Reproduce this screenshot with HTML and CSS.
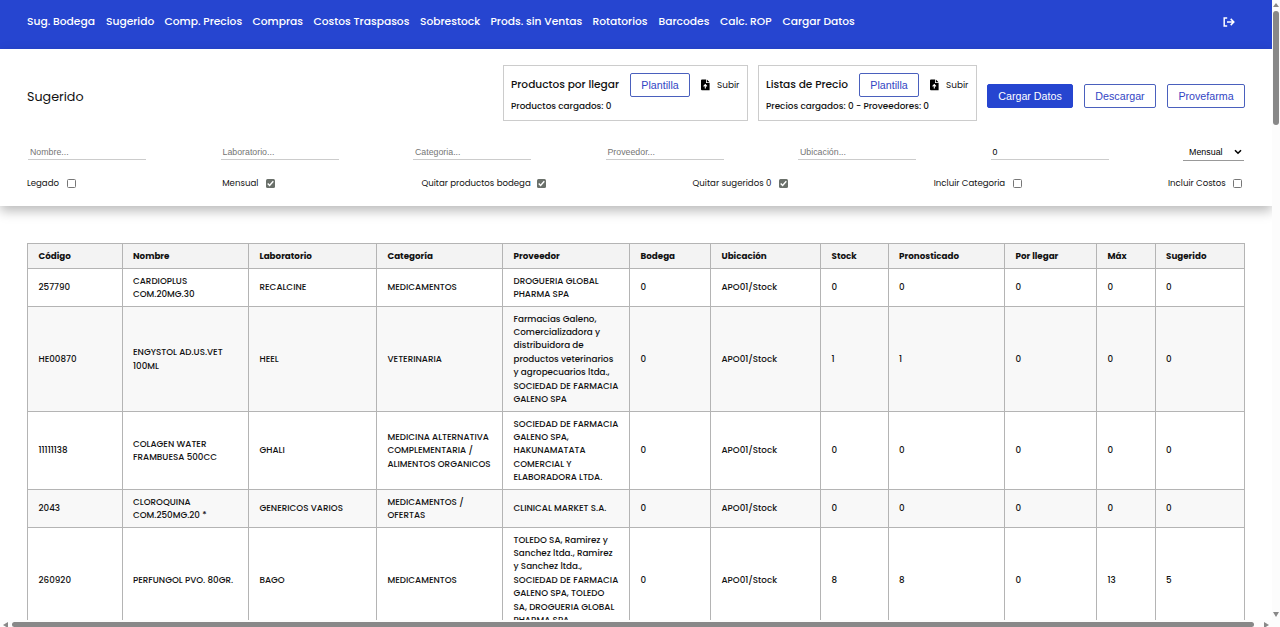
FILE: index.html
```html
<!DOCTYPE html>
<html lang="es">
<head>
<meta charset="utf-8">
<title>Sugerido</title>
<link rel="stylesheet" href="styles.css">
</head>
<body>
<div class="window">
<div class="page">
  <nav class="navbar">
    <div class="nav-links"><a>Sug. Bodega</a><a>Sugerido</a><a>Comp. Precios</a><a>Compras</a><a>Costos Traspasos</a><a>Sobrestock</a><a>Prods. sin Ventas</a><a>Rotatorios</a><a>Barcodes</a><a>Calc. ROP</a><a>Cargar Datos</a></div>
    <svg class="logout" viewBox="0 0 12 10" fill="none" stroke="#fff" stroke-width="1.5"><path d="M4.2 1H1.2V9H4.2M4 5H10.5M7.7 1.9L10.8 5L7.7 8.1"/></svg>
  </nav>
  <section class="panel">
    <div class="top">
      <h1>Sugerido</h1>
      <div class="actions">
        <div class="box box-products">
          <div class="box-row"><span class="box-title">Productos por llegar</span><button class="btn small">Plantilla</button><svg class="file" viewBox="0 0 9 12"><path fill="#000" d="M1 0.5H5V4H8.6V11.2H1Q0 11.2 0 10.2V1.5Q0 .5 1 .5ZM5.8.5L8.6 3.2H5.8Z"/><path d="M4.3 9.5V5.8M2.6 7.3L4.3 5.6L6 7.3" stroke="#fff" stroke-width="1.1" fill="none"/></svg><span class="upload">Subir</span></div>
          <p>Productos cargados: 0</p>
        </div>
        <div class="box box-prices">
          <div class="box-row"><span class="box-title">Listas de Precio</span><button class="btn small">Plantilla</button><svg class="file" viewBox="0 0 9 12"><path fill="#000" d="M1 0.5H5V4H8.6V11.2H1Q0 11.2 0 10.2V1.5Q0 .5 1 .5ZM5.8.5L8.6 3.2H5.8Z"/><path d="M4.3 9.5V5.8M2.6 7.3L4.3 5.6L6 7.3" stroke="#fff" stroke-width="1.1" fill="none"/></svg><span class="upload">Subir</span></div>
          <p>Precios cargados: 0 - Proveedores: 0</p>
        </div>
        <button class="btn primary">Cargar Datos</button>
        <button class="btn download">Descargar</button>
        <button class="btn provider">Provefarma</button>
      </div>
    </div>
    <div class="filters">
      <span class="field">Nombre...</span><span class="field">Laboratorio...</span><span class="field">Categoria...</span><span class="field">Proveedor...</span><span class="field">Ubicación...</span><span class="field filled">0</span>
      <span class="select">Mensual<svg viewBox="0 0 8 6"><path d="M1 1.2L4 4.2L7 1.2" fill="none" stroke="#000" stroke-width="1.6"/></svg></span>
    </div>
    <div class="checks">
      <label class="c1">Legado<i class="check"></i></label>
      <label class="c2">Mensual<i class="check on"><svg viewBox="0 0 9 9"><path d="M1.7 4.6L3.6 6.5L7.3 2.3"/></svg></i></label>
      <label class="c3">Quitar productos bodega<i class="check on"><svg viewBox="0 0 9 9"><path d="M1.7 4.6L3.6 6.5L7.3 2.3"/></svg></i></label>
      <label class="c4">Quitar sugeridos 0<i class="check on"><svg viewBox="0 0 9 9"><path d="M1.7 4.6L3.6 6.5L7.3 2.3"/></svg></i></label>
      <label class="c5">Incluir Categoria<i class="check"></i></label>
      <label class="c6">Incluir Costos<i class="check"></i></label>
    </div>
  </section>
  <table>
    <colgroup><col class="w-code"><col class="w-name"><col class="w-lab"><col class="w-cat"><col class="w-prov"><col class="w-bod"><col class="w-ubi"><col class="w-stock"><col class="w-pron"><col class="w-lle"><col class="w-max"><col class="w-sug"></colgroup>
    <thead><tr><th>Código</th><th>Nombre</th><th>Laboratorio</th><th>Categoría</th><th>Proveedor</th><th>Bodega</th><th>Ubicación</th><th>Stock</th><th>Pronosticado</th><th>Por llegar</th><th>Máx</th><th>Sugerido</th></tr></thead>
    <tbody>
      <tr class="lines-2"><td>257790</td><td>CARDIOPLUS<br>COM.20MG.30</td><td>RECALCINE</td><td>MEDICAMENTOS</td><td>DROGUERIA GLOBAL<br>PHARMA SPA</td><td>0</td><td>APO01/Stock</td><td>0</td><td>0</td><td>0</td><td>0</td><td>0</td></tr>
      <tr class="lines-7"><td>HE00870</td><td>ENGYSTOL AD.US.VET<br>100ML</td><td>HEEL</td><td>VETERINARIA</td><td>Farmacias Galeno,<br>Comercializadora y<br>distribuidora de<br>productos veterinarios<br>y agropecuarios ltda.,<br>SOCIEDAD DE FARMACIA<br>GALENO SPA</td><td>0</td><td>APO01/Stock</td><td>1</td><td>1</td><td>0</td><td>0</td><td>0</td></tr>
      <tr class="lines-5"><td>11111138</td><td>COLAGEN WATER<br>FRAMBUESA 500CC</td><td>GHALI</td><td>MEDICINA ALTERNATIVA<br>COMPLEMENTARIA /<br>ALIMENTOS ORGANICOS</td><td>SOCIEDAD DE FARMACIA<br>GALENO SPA,<br>HAKUNAMATATA<br>COMERCIAL Y<br>ELABORADORA LTDA.</td><td>0</td><td>APO01/Stock</td><td>0</td><td>0</td><td>0</td><td>0</td><td>0</td></tr>
      <tr class="lines-2"><td>2043</td><td>CLOROQUINA<br>COM.250MG.20 *</td><td>GENERICOS VARIOS</td><td>MEDICAMENTOS /<br>OFERTAS</td><td>CLINICAL MARKET S.A.</td><td>0</td><td>APO01/Stock</td><td>0</td><td>0</td><td>0</td><td>0</td><td>0</td></tr>
      <tr class="lines-7"><td>260920</td><td>PERFUNGOL PVO. 80GR.</td><td>BAGO</td><td>MEDICAMENTOS</td><td>TOLEDO SA, Ramirez y<br>Sanchez ltda., Ramirez<br>y Sanchez ltda.,<br>SOCIEDAD DE FARMACIA<br>GALENO SPA, TOLEDO<br>SA, DROGUERIA GLOBAL<br>PHARMA SPA</td><td>0</td><td>APO01/Stock</td><td>8</td><td>8</td><td>0</td><td>13</td><td>5</td></tr>
    </tbody>
  </table>
</div>
<div class="vbar"><i class="up"></i><i class="thumb"></i><i class="down"></i></div>
<div class="hbar"><i class="left"></i><i class="thumb"></i><i class="right"></i></div>
</div>
</body>
</html>
```
FILE: styles.css
```css
* { box-sizing: border-box; }
body { margin: 0; overflow: hidden; font-family: Poppins, Inter, sans-serif; color: #111; background: #fff; }
.window { display: grid; grid-template-columns: 1272px 8px; grid-template-rows: 620px 7px; width: 1280px; height: 627px; overflow: hidden; }
.page { overflow: hidden; min-width: 0; }

.navbar { height: 49px; padding: 0 37px 6px 27px; background: #2645d0; display: flex; align-items: center; justify-content: space-between; }
.nav-links { display: grid; grid-template-columns: 79px 58.5px 88px 61px 106.5px 70.5px 102px 66px 61.5px 62.5px 73px; color: #fff; font-size: 10.7px; font-weight: 500; white-space: nowrap; }
.logout { width: 12px; height: 10px; }

.panel { height: 157px; padding: 16px 27px 0; background: #fff; box-shadow: 0 5px 11px rgba(0,0,0,.27); position: relative; }
.top { display: flex; justify-content: space-between; height: 56px; }
h1 { margin: 5px 0 0; font-size: 12.7px; font-weight: 400; line-height: 54px; }
.actions { display: flex; align-items: center; height: 62px; }
.box { height: 56px; margin: 0 10px 6px 0; padding: 6.5px 7px 0; border: 1px solid #ccc; white-space: nowrap; }
.box-products { width: 245px; }
.box-prices { width: 219px; }
.box-row { display: flex; align-items: center; height: 24px; }
.box-title { font-size: 10.6px; font-weight: 500; flex: 1; }
.box p { margin: 2px 0 0; font-size: 8.85px; line-height: 14px; font-weight: 500; }
.file { width: 9px; height: 12px; margin: 0 7px 0 11px; }
.upload { width: 23px; padding-top: 1px; font-size: 8.9px; }
.btn { height: 24px; padding: 0; border: 1px solid #4a60bd; border-radius: 2px; background: #fff; color: #3345c4; font: 10.7px "Liberation Sans", Arial, sans-serif; }
.small { width: 60px; }
.primary { width: 86px; margin-right: 11px; background: #2645d0; border-color: #2645d0; color: #fff; }
.download { width: 72px; margin-right: 11px; }
.provider { width: 78px; }

.filters { display: flex; justify-content: space-between; padding: 23px 1px 0; height: 44px; align-items: flex-start; }
.field { width: 118px; height: 15.5px; padding-left: 2px; border-bottom: 1px solid #ccc; color: #757575; font: 8.8px/16px "Liberation Sans", Arial, sans-serif; }
.filled { color: #000; }
.select { width: 61px; height: 16.5px; padding: 0 2px 0 6px; border-bottom: 1px solid #999; color: #000; font: 8.9px/16px "Liberation Sans", Arial, sans-serif; display: flex; justify-content: space-between; align-items: center; }
.select svg { width: 8px; height: 6px; }
.checks { display: flex; justify-content: space-between; margin-top: 11px; height: 14px; font-size: 8.6px; white-space: nowrap; }
.checks label { display: flex; align-items: center; justify-content: space-between; padding-right: 3px; }
.c1 { width: 52px; }
.c2 { width: 56px; }
.c3 { width: 128px; }
.c4 { width: 98px; }
.c5 { width: 91px; }
.c6 { width: 77px; }
.check { width: 9px; height: 9px; border: 1px solid #777; border-radius: 1.5px; background: #fff; }
.on { border: 0; background: #6a706a; }
.on svg { display: block; width: 9px; height: 9px; fill: none; stroke: #fff; stroke-width: 1.4; }

table { width: 1218px; margin: 37px 0 0 27px; table-layout: fixed; border-collapse: collapse; font-size: 8.75px; line-height: 13.35px; font-weight: 500; }
th, td { height: 25px; padding: 1px 0 0 10.5px; text-align: left; vertical-align: middle; white-space: nowrap; border: 1px solid #b4b4b4; }
th { font-weight: 700; background: #f3f3f3; }
tbody tr:nth-child(even) { background: #f8f8f8; }
.lines-2 td { height: 38px; }
.lines-5 td { height: 78px; }
.lines-7 td { height: 105px; }
.w-code { width: 94.5px; }
.w-name { width: 126.5px; }
.w-lab { width: 128px; }
.w-cat { width: 126px; }
.w-prov { width: 127px; }
.w-bod { width: 81px; }
.w-ubi { width: 110px; }
.w-stock { width: 67.5px; }
.w-pron { width: 116.5px; }
.w-lle { width: 92px; }
.w-max { width: 58.5px; }
.w-sug { width: 89.5px; }

.vbar { display: flex; flex-direction: column; align-items: center; padding-top: 3px; background: #fcfcfc; }
.vbar .up { border: 3px solid transparent; border-top: 0; border-bottom: 4px solid #888; }
.vbar .thumb { width: 6px; height: 114px; margin-top: 4px; border-radius: 3px; background: #888; }
.vbar .down { margin-top: 487px; border: 3px solid transparent; border-bottom: 0; border-top: 5px solid #888; }
.hbar { grid-column: 1 / 3; display: flex; align-items: center; background: #fcfcfc; padding: 2px 0 0 3px; }
.hbar .left { border: 3px solid transparent; border-left: 0; border-right: 5px solid #888; }
.hbar .thumb { width: 1242px; height: 5px; margin: 0 10px 0 4px; border-radius: 3px; background: #888; }
.hbar .right { border: 3px solid transparent; border-right: 0; border-left: 5px solid #888; }
```
